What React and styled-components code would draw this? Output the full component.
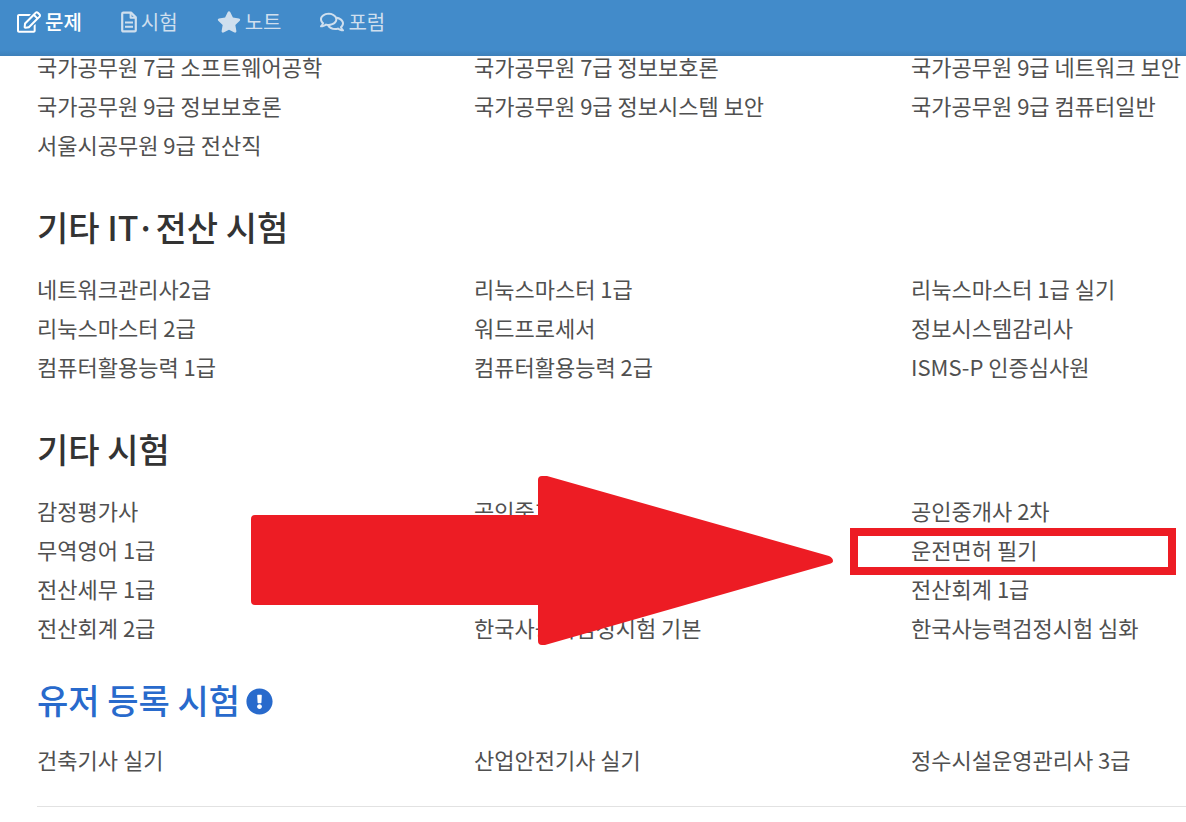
import React from 'react';
import styled, { createGlobalStyle } from 'styled-components';
import { FaRegEdit, FaStar, FaRegComments, FaExclamationCircle } from 'react-icons/fa';

const GlobalStyle = createGlobalStyle`
  * { box-sizing: border-box; }
  body {
    margin: 0;
    background: #fff;
    color: #505050;
    font-family: 'Noto Sans CJK KR', 'Noto Sans', sans-serif;
    font-size: 22px;
  }
`;

const Page = styled.div`
  overflow-x: clip;
`;

const Header = styled.header`
  position: fixed;
  top: 0;
  left: 0;
  right: 0;
  z-index: 10;
  height: 56px;
  padding: 0 17px 12px;
  background: linear-gradient(#428bca 50px, #3d80ba);
`;

const Nav = styled.nav`
  display: flex;
  gap: 39px;
`;

const NavLink = styled.a`
  display: flex;
  align-items: center;
  gap: 4px;
  line-height: 44px;
  font-size: 20px;
  font-weight: ${(p) => (p.$active ? 500 : 400)};
  color: ${(p) => (p.$active ? '#fff' : '#cfdfee')};
  text-decoration: none;
  white-space: nowrap;

  svg {
    flex: none;
    width: ${(p) => p.$iconWidth}px;
    height: 22px;
  }
`;

const Main = styled.main`
  padding: 47px 0 0 37px;
`;

const Heading = styled.h2`
  display: flex;
  align-items: center;
  gap: 6px;
  margin: ${(p) => (p.$accent ? '30px 0 18px' : '40px 0 20px')};
  font-size: 34px;
  line-height: 45px;
  font-weight: 500;
  color: ${(p) => (p.$accent ? '#286acc' : '#333')};
  white-space: nowrap;

  svg { width: 27px; height: 27px; margin-top: 4px; }
`;

const ListArea = styled.div`
  position: relative;
`;

const ExamList = styled.ul`
  display: grid;
  grid-template-columns: repeat(3, minmax(437px, 1fr));
  margin: 0;
  padding: 0;
  list-style: none;
`;

const ExamLink = styled.a`
  display: block;
  line-height: 39px;
  color: inherit;
  text-decoration: none;
  white-space: nowrap;
`;

const Marker = styled.div`
  position: absolute;
  left: 813px;
  top: 37px;
  width: 326px;
  height: 47px;
  border: 8px solid #ed1c24;
  pointer-events: none;
`;

const Arrow = styled.svg`
  position: absolute;
  left: 214px;
  top: -16px;
  pointer-events: none;
`;

const Divider = styled.hr`
  height: 1px;
  margin: 27px 0 0;
  border: 0;
  background: #e2e2e2;
`;

function FileIcon(props) {
  return (
    <svg viewBox="0 0 16 22" fill="none" stroke="currentColor" strokeWidth="2" strokeLinejoin="round" {...props}>
      <path d="M2.3 1.6H10L14.8 6.4V19.2Q14.8 20.4 13.6 20.4H2.4Q1.2 20.4 1.2 19.2V2.8Q1.2 1.6 2.3 1.6Z" strokeWidth="2.2" />
      <path d="M9.6 2V6.8H14.4" />
      <path d="M4 11.6H12M4 15.8H12" />
    </svg>
  );
}

const navItems = [
  { label: '문제', Icon: FaRegEdit, iconWidth: 24, active: true },
  { label: '시험', Icon: FileIcon, iconWidth: 16 },
  { label: '노트', Icon: FaStar, iconWidth: 24 },
  { label: '포럼', Icon: FaRegComments, iconWidth: 24 },
];

const publicExams = [
  '국가공무원 7급 소프트웨어공학', '국가공무원 7급 정보보호론', '국가공무원 9급 네트워크 보안',
  '국가공무원 9급 정보보호론', '국가공무원 9급 정보시스템 보안', '국가공무원 9급 컴퓨터일반',
  '서울시공무원 9급 전산직',
];

const itExams = [
  '네트워크관리사2급', '리눅스마스터 1급', '리눅스마스터 1급 실기',
  '리눅스마스터 2급', '워드프로세서', '정보시스템감리사',
  '컴퓨터활용능력 1급', '컴퓨터활용능력 2급', 'ISMS-P 인증심사원',
];

const otherExams = [
  '감정평가사', '공인중개사 1차', '공인중개사 2차',
  '무역영어 1급', '무역영어 2급', '운전면허 필기',
  '전산세무 1급', '전산세무 2급', '전산회계 1급',
  '전산회계 2급', '한국사능력검정시험 기본', '한국사능력검정시험 심화',
];

const userExams = ['건축기사 실기', '산업안전기사 실기', '정수시설운영관리사 3급'];

function Exams({ items }) {
  return (
    <ExamList>
      {items.map((name) => (
        <li key={name}><ExamLink href="#">{name}</ExamLink></li>
      ))}
    </ExamList>
  );
}

export default function App() {
  return (
    <Page>
      <GlobalStyle />
      <Header>
        <Nav>
          {navItems.map(({ label, Icon, iconWidth, active }) => (
            <NavLink key={label} href="#" $active={active} $iconWidth={iconWidth}>
              <Icon aria-hidden="true" />
              {label}
            </NavLink>
          ))}
        </Nav>
      </Header>
      <Main>
        <Exams items={publicExams} />
        <Heading>기타 IT·전산 시험</Heading>
        <Exams items={itExams} />
        <Heading>기타 시험</Heading>
        <ListArea>
          <Exams items={otherExams} />
          <Arrow width="583" height="171" viewBox="0 0 583 171" aria-hidden="true">
            <path
              fill="#ed1c24"
              d="M4 40H287V5Q287 1 291 1L296 1L578 81Q582 83 582 86Q582 88 578 89L294 170L291 170Q287 170 287 166V130H4Q0 130 0 126V44Q0 40 4 40Z"
            />
          </Arrow>
          <Marker />
        </ListArea>
        <Heading $accent>
          유저 등록 시험
          <FaExclamationCircle aria-hidden="true" />
        </Heading>
        <Exams items={userExams} />
        <Divider />
      </Main>
    </Page>
  );
}
